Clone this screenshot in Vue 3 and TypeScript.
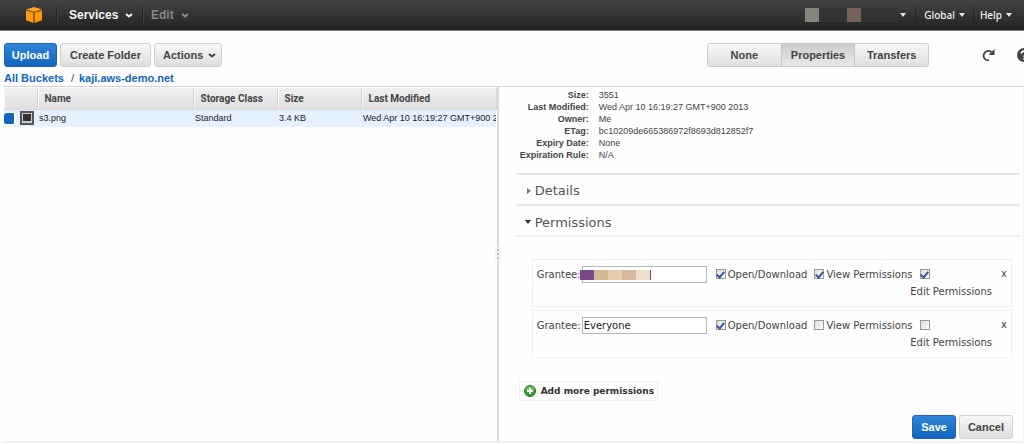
<script setup lang="ts">
import { reactive } from 'vue'

interface Grant {
  id: string
  grantee: string
  hidden: boolean
  open: boolean
  view: boolean
  edit: boolean
}

const modes = ['None', 'Properties', 'Transfers']
const facts = [
  ['Size:', '3551'],
  ['Last Modified:', 'Wed Apr 10 16:19:27 GMT+900 2013'],
  ['Owner:', 'Me'],
  ['ETag:', 'bc10209de665386972f8693d812852f7'],
  ['Expiry Date:', 'None'],
  ['Expiration Rule:', 'N/A'],
]
const grants = reactive<Grant[]>([
  { id: 'owner', grantee: '', hidden: true, open: true, view: true, edit: true },
  { id: 'all', grantee: 'Everyone', hidden: false, open: true, view: false, edit: false },
])
</script>

<template>
  <div class="console">
    <header class="topbar">
      <a href="#" class="logo" aria-label="Home">
        <svg width="16" height="16" viewBox="0 0 16 16">
          <path d="M0 2.600 8 0l8 2.600-8 2.300z" fill="#ffa51c" />
          <path d="M0 3.400 7.500 5.600V16L0 13.200z" fill="#ff9d0d" />
          <path d="M16 3.400 8.500 5.600V16l7.500-2.800z" fill="#ff9900" />
          <path d="M0 3 7.700 5.300V16M16 3 8.300 5.300" fill="none" stroke="#8a560d" stroke-width=".7" />
        </svg>
      </a>
      <button class="nav services">Services
        <svg class="chev" width="8" height="5" viewBox="0 0 8 5"><path d="M1 1l3 2.500L7 1" /></svg>
      </button>
      <button class="nav edit">Edit
        <svg class="chev" width="8" height="5" viewBox="0 0 8 5"><path d="M1 1l3 2.500L7 1" /></svg>
      </button>
      <div class="account">
        <button class="menu user" aria-label="Account">
          <span class="mask"><i class="m1"></i><i class="m2"></i><i class="m3"></i><i class="m4"></i></span>
          <svg width="6" height="4" viewBox="0 0 6 4"><path d="M0 0h6L3 4z" /></svg>
        </button>
        <button class="menu">Global<svg width="6" height="4" viewBox="0 0 6 4"><path d="M0 0h6L3 4z" /></svg></button>
        <button class="menu help">Help<svg width="6" height="4" viewBox="0 0 6 4"><path d="M0 0h6L3 4z" /></svg></button>
      </div>
    </header>

    <div class="toolbar">
      <button class="btn primary upload">Upload</button>
      <button class="btn create">Create Folder</button>
      <button class="btn actions">Actions
        <svg class="chev" width="8" height="5" viewBox="0 0 8 5"><path d="M1 1l3 2.500L7 1" /></svg>
      </button>
      <div class="modes">
        <button v-for="m in modes" :key="m" :class="{ on: m === 'Properties' }">{{ m }}</button>
      </div>
      <button class="tool refresh" aria-label="Refresh">
        <svg width="14" height="14" viewBox="0 0 14 14">
          <path d="M7 12.400A4.800 4.800 0 1 1 9.500 4" fill="none" stroke="#444" stroke-width="1.800" />
          <path d="M12.500 1v6h-6z" fill="#444" />
        </svg>
      </button>
      <button class="tool question" aria-label="Help">
        <svg width="14" height="14" viewBox="0 0 14 14">
          <circle cx="7" cy="7" r="7" fill="#444" />
          <path d="M4.500 5.500C4.500 2.400 9.500 2.600 9.500 5.200c0 1.700-2.400 1.700-2.400 3.500M7.100 9.800v1.800" fill="none" stroke="#fff" stroke-width="1.700" />
        </svg>
      </button>
    </div>

    <nav class="crumbs">
      <a href="#">All Buckets</a><span>/</span><a href="#">kaji.aws-demo.net</a>
    </nav>

    <main class="body">
      <section class="files">
        <table>
          <colgroup><col class="c1" /><col class="c2" /><col class="c3" /><col class="c4" /><col /></colgroup>
          <thead>
            <tr><th></th><th>Name</th><th>Storage Class</th><th>Size</th><th>Last Modified</th></tr>
          </thead>
          <tbody>
            <tr>
              <td class="marks">
                <span class="cellmarks">
                  <button class="dot" aria-label="Selected"></button>
                  <svg width="14" height="14" viewBox="0 0 14 14"><rect x="1" y="1" width="12" height="12" fill="#ccc" stroke="#555" stroke-width="2" /><rect x="3" y="3" width="8" height="7" fill="#333" /></svg>
                </span>
              </td>
              <td>s3.png</td><td>Standard</td><td>3.4 KB</td><td>Wed Apr 10 16:19:27 GMT+900 2013</td>
            </tr>
          </tbody>
        </table>
      </section>
      <div class="splitter"><span><i></i><i></i><i></i></span></div>
      <section class="props">
        <dl>
          <template v-for="f in facts" :key="f[0]"><dt>{{ f[0] }}</dt><dd>{{ f[1] }}</dd></template>
        </dl>
        <button class="fold">
          <svg width="4" height="6" viewBox="0 0 4 6"><path d="M0 0v6l4-3z" fill="#777" /></svg>Details
        </button>
        <button class="fold open">
          <svg width="6" height="4" viewBox="0 0 6 4"><path d="M0 0h6L3 4z" fill="#333" /></svg>Permissions
        </button>
        <div class="grants">
          <div v-for="g in grants" :key="g.id" class="grant">
            <div class="line">
              <label class="who" :for="g.id + '-grantee'">Grantee:</label>
              <span class="field">
                <input :id="g.id + '-grantee'" v-model="g.grantee" type="text" />
                <span v-if="g.hidden" class="mosaic"><i></i><i></i><i></i><i></i><i></i><i></i></span>
              </span>
              <label class="opt first"><input v-model="g.open" type="checkbox" />Open/Download</label>
              <label class="opt"><input v-model="g.view" type="checkbox" />View Permissions</label>
              <span class="opt"><input :id="g.id + '-edit'" v-model="g.edit" type="checkbox" /></span>
              <button class="remove" aria-label="Remove">x</button>
            </div>
            <label class="editlabel" :for="g.id + '-edit'">Edit Permissions</label>
          </div>
        </div>
        <button class="add">
          <svg width="12" height="12" viewBox="0 0 12 12"><circle cx="6" cy="6" r="5.500" fill="#2fa32f" stroke="#1d7f22" /><path d="M1.500 5a4.600 4.600 0 0 1 9 0z" fill="#6cc65c" /><path d="M6 3v6M3 6h6" stroke="#fff" stroke-width="2" /></svg>
          Add more permissions
        </button>
        <div class="foot">
          <button class="btn primary">Save</button>
          <button class="btn">Cancel</button>
        </div>
      </section>
    </main>
  </div>
</template>

<style>
body { margin: 0; background: #fefefe; }
</style>

<style scoped>
* { box-sizing: border-box; }
.console { min-height: 100vh; display: flex; flex-direction: column; overflow: hidden; font: 11px "Liberation Sans", Arial, sans-serif; color: #444; }
button { font: inherit; color: inherit; padding: 0; margin: 0; border: 0; background: none; cursor: pointer; white-space: nowrap; }
.chev path { fill: none; stroke: currentColor; stroke-width: 2; }
.topbar { height: 31px; flex: none; display: flex; align-items: center; background: linear-gradient(#444, #222); border-bottom: 1px solid #777; }
.logo { width: 56px; height: 16px; padding-left: 26px; }
.nav { display: flex; align-items: center; height: 16px; border-left: 1px solid #222; box-shadow: inset 1px 0 #444; font: bold 12px "Liberation Sans", Arial, sans-serif; }
.services { color: #f4f4f4; width: 86px; padding-left: 12px; gap: 7px; }
.edit { color: #888; padding-left: 8px; gap: 7px; }
.account { margin-left: auto; display: flex; align-items: center; padding-right: 12px; }
.menu { display: flex; align-items: center; gap: 4px; height: 16px; color: #f0f0f0; font: 500 10px "Noto Sans", sans-serif; padding: 0 5px 0 8px; border-left: 1px solid #222; margin-left: 3px; }
.menu svg { fill: #e8e8e8; }
.help { padding-right: 0; padding-left: 6px; }
.user { border: 0; padding-right: 6px; gap: 3px; }
.mask { display: flex; height: 14px; background: #333; width: 92px; }
.mask i { width: 14px; }
.mask .m1 { background: #85857a; }
.mask .m2 { width: 28px; }
.mask .m3 { background: #74615a; }
.toolbar { display: flex; align-items: center; gap: 3px; padding: 12px 0 6px 4px; flex: none; }
.btn { height: 24px; padding: 0 8px; border: 1px solid #d2d2d2; border-radius: 3px; background: linear-gradient(#f7f7f7, #dedede); font: bold 11px "Liberation Sans", Arial, sans-serif; color: #444; }
.primary { color: #fff; border-color: #1c65b5; background: linear-gradient(#2f85da, #1166bb); }
.upload { width: 53px; padding: 0; }
.create { width: 91px; padding: 0; }
.actions { width: 68px; display: flex; align-items: center; justify-content: space-between; padding: 0 5px 0 8px; }
.modes { display: flex; margin-left: auto; margin-right: 53px; height: 24px; width: 222px; border: 1px solid #ccc; border-radius: 3px; overflow: hidden; }
.modes button { flex: 1; background: linear-gradient(#f7f7f7, #dfdfdf); font-weight: bold; }
.modes .on { background: linear-gradient(#ccc, #e8e8e8); border: solid #c6c6c6; border-width: 0 1px; }
.tool { height: 14px; width: 14px; flex: none; }
.refresh { margin-left: -3px; margin-right: 18px; }
.question { margin-right: -7px; }
.crumbs { display: flex; padding-left: 4px; height: 13px; line-height: 11px; flex: none; font-size: 11px; font-weight: bold; }
.crumbs span { padding: 0 5px 0 7px; font-weight: normal; }
.crumbs a { color: #1166bb; text-decoration: none; }
.body { flex: 1; display: flex; margin-left: 4px; border-top: 1px solid #d4d4d4; border-bottom: 2px solid #f1f1f1; margin-bottom: 1px; }
.files { width: 48.3%; overflow: hidden; padding-top: 1px; }
table { table-layout: fixed; width: 100%; border-collapse: collapse; }
.c1 { width: 33px; }
.c2 { width: 156px; }
.c3 { width: 84px; }
.c4 { width: 84px; }
th, td { padding: 0; text-align: left; white-space: nowrap; overflow: hidden; }
th { height: 21px; padding-left: 7px; font: bold 10px Roboto, Arial, sans-serif; background: linear-gradient(#f0f0f0, #e0e0e0); border-right: 1px solid #d4d4d4; border-bottom: 1px solid #d8d8d8; box-shadow: inset 1px 0 #f8f8f8; }
td { height: 18px; padding-left: 2px; font-size: 9px; background: #e5f1fe; color: #222; }
.marks { padding: 0; }
.cellmarks { display: flex; align-items: center; gap: 4px; }
.dot { width: 12px; height: 13px; background: #1166bb; border: solid #fff; border-width: 1px 2px 1px 0; border-radius: 3px; }
.splitter { width: 2px; background: #d8d8d8; display: flex; align-items: center; justify-content: center; flex: none; }
.splitter span { flex: none; width: 6px; height: 14px; display: flex; flex-direction: column; align-items: center; justify-content: space-evenly; background: #f4f4f4; margin-bottom: 20px; }
.splitter i { width: 2px; height: 2px; background: #bbb; }
.props { flex: 1; min-width: 0; display: flex; flex-direction: column; padding: 0 3px 2px 17px; border-right: 1px solid #f4f4f4; }
dl { margin: 0; display: grid; grid-template-columns: 73px 1fr; column-gap: 10px; padding: 2px 0 12px; font-size: 9px; line-height: 12px; border-bottom: 2px solid #e2e2e2; border-radius: 0 0 4px 4px; }
dt { font-weight: bold; text-align: right; white-space: nowrap; }
dd { margin: 0; color: #444; }
.fold { display: flex; align-items: center; gap: 4px; height: 31px; padding: 2px 0 0 11px; font: 13px "DejaVu Sans", Verdana, sans-serif; color: #555; border-bottom: 2px solid #e2e2e2; border-radius: 0 0 4px 4px; }
.open { padding-top: 3px; padding-left: 9px; border-radius: 0; border-color: #f0f0f0; }
.grants { padding: 22px 8px 0 16px; display: grid; gap: 3px; }
.grant { border: 1px solid #f0f0f0; height: 48px; padding: 5px 4px 0 4px; font: 10px "DejaVu Sans", Verdana, sans-serif; }
.line { display: flex; align-items: center; height: 18px; }
.who { width: 45px; }
.field { position: relative; flex: none; width: 125px; height: 17px; }
.field input { display: block; width: 100%; height: 100%; border: 1px solid #b4b7c0; padding: 0 1px; font: inherit; color: #222; background: #fff; }
.mosaic { position: absolute; left: -2px; top: 4px; display: flex; height: 10px; }
.mosaic i { width: 14px; background: #7b4788; }
.mosaic i:nth-child(2) { background: #d4b794; }
.mosaic i:nth-child(3) { background: #e8ccab; }
.mosaic i:nth-child(4) { background: #d6b99c; }
.mosaic i:nth-child(5) { background: #efe0c7; }
.mosaic i:nth-child(6) { width: 1px; }
.opt { display: flex; align-items: center; gap: 2px; margin-left: 7px; white-space: nowrap; }
.first { margin-left: 9px; }
.opt input { appearance: none; width: 10px; height: 10px; margin: 0; border: 1px solid #999; background: linear-gradient(135deg, #ddd, #fff); display: grid; place-items: center; }
.opt input:checked::after { content: ""; width: 3px; height: 6px; border: solid #3a519c; border-width: 0 2px 2px 0; transform: rotate(40deg); margin-bottom: 2px; }
.remove { margin-left: auto; line-height: 14px; }
.editlabel { display: block; width: fit-content; margin-left: auto; margin-right: 15px; line-height: 18px; }
.add { align-self: flex-start; display: flex; align-items: center; gap: 5px; height: 20px; margin: 23px 0 0 3px; padding: 0 3px 0 4px; border: 1px solid #f0f0f0; font: bold 9px "DejaVu Sans", Verdana, sans-serif; color: #333; }
.foot { display: flex; justify-content: flex-end; gap: 3px; margin-top: auto; padding-right: 7px; }
</style>
